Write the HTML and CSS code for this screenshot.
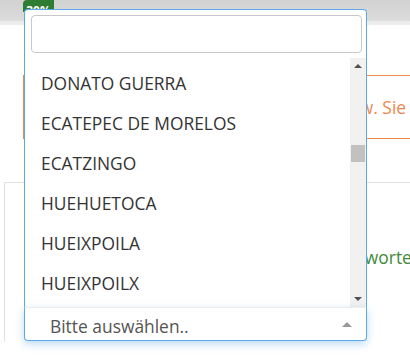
FILE: index.html
```html
<!DOCTYPE html>
<html lang="de">
<head>
  <meta charset="UTF-8" />
  <meta name="viewport" content="width=device-width, initial-scale=1.0"/>
  <title>Gemeinde auswählen</title>
  <link rel="stylesheet" href="styles.css">
</head>
<body>
  <div class="progress">
    <div class="progress-bar">30%</div>
  </div>

  <div class="alert">bzw. Sie können die Gemeinde auch eintippen.</div>

  <div class="card">
    <p class="answer">Antworten</p>
  </div>

  <div class="select-wrap">
    <div class="dropdown">
      <div class="search">
        <input type="text" class="search-field" autofocus />
      </div>
      <div class="results">
        <ul class="options">
          <li>CUAUTITLÁN IZCALLI</li>
          <li>DONATO GUERRA</li>
          <li>ECATEPEC DE MORELOS</li>
          <li>ECATZINGO</li>
          <li>HUEHUETOCA</li>
          <li>HUEIXPOILA</li>
          <li>HUEIXPOILX</li>
          <li>HUEYPOXTLA</li>
        </ul>
        <div class="scrollbar">
          <div class="scroll-btn up"></div>
          <div class="scroll-track"><div class="scroll-thumb"></div></div>
          <div class="scroll-btn down"></div>
        </div>
      </div>
    </div>
    <div class="selection">
      <span class="placeholder">Bitte auswählen..</span>
      <span class="arrow"></span>
    </div>
  </div>
</body>
</html>
```

FILE: styles.css
```css
* {
  margin: 0;
  padding: 0;
  box-sizing: border-box;
  font-family: 'Open Sans', 'Noto Sans', sans-serif;
}

html,
body {
  height: 100%;
  overflow: hidden;
}

body {
  background: #fff;
  position: relative;
}

.progress {
  height: 25px;
  background: linear-gradient(#d2d2d2, #dcdcdc);
  border-bottom: 4px solid #ececec;
}

.progress-bar {
  width: 31px;
  height: 12px;
  margin-left: 23px;
  background: #2f7d32;
  color: #fff;
  font-size: 12px;
  font-weight: bold;
  line-height: 22px;
  text-align: center;
  overflow: hidden;
  border-radius: 4px 0 0 0;
}

.alert {
  margin: 50px 0 0 23px;
  height: 64px;
  border: 1px solid #ec8a4c;
  border-left-width: 2px;
  border-right: none;
  color: #f0874f;
  font-size: 17.4px;
  line-height: 62px;
  padding-left: 316px;
  white-space: nowrap;
  overflow: hidden;
}

.card {
  margin: 43px 0 0 4px;
  height: 160px;
  border: 1px solid #e2e2e2;
  border-right: none;
  border-bottom: none;
}

.answer {
  color: #3f8a3a;
  font-size: 17.4px;
  padding: 62px 0 0 332px;
  white-space: nowrap;
  overflow: hidden;
}

.select-wrap {
  position: absolute;
  left: 24px;
  top: 9px;
  width: 343px;
  display: flex;
  flex-direction: column;
}

.dropdown {
  background: #fff;
  border: 1px solid #5aa9ec;
  border-bottom: none;
  border-radius: 4px 4px 0 0;
}

.search {
  padding: 5px 4px 5px 6px;
}

.search-field {
  display: block;
  width: 100%;
  height: 38px;
  border: 1px solid #c8c8c8;
  border-radius: 4px;
  outline: none;
  padding: 0 4px;
  font-size: 16px;
  caret-color: #333;
}

.results {
  display: flex;
  height: 249px;
  overflow: hidden;
}

.options {
  flex: 1;
  list-style: none;
  margin-top: -35px;
}

.options li {
  height: 40px;
  line-height: 40px;
  padding-left: 16px;
  font-size: 17.4px;
  color: #333;
  white-space: nowrap;
}

.scrollbar {
  width: 16px;
  background: #f1f1f1;
  display: flex;
  flex-direction: column;
}

.scroll-btn {
  height: 16px;
  display: flex;
  justify-content: center;
  align-items: center;
}

.scroll-btn::after {
  content: "";
  border-left: 4px solid transparent;
  border-right: 4px solid transparent;
}

.scroll-btn.up::after {
  border-bottom: 4px solid #505050;
}

.scroll-btn.down::after {
  border-top: 4px solid #505050;
}

.scroll-track {
  flex: 1;
}

.scroll-thumb {
  margin: 71px 1px 0 1px;
  height: 17px;
  background: #c1c1c1;
}

.selection {
  height: 34px;
  background: #fff;
  border: 1px solid #5aa9ec;
  border-top: 1px solid #ececec;
  border-radius: 0 0 4px 4px;
  box-shadow: 0 3px 8px rgba(102, 175, 233, 0.45);
  display: flex;
  align-items: center;
  justify-content: space-between;
  padding: 4px 14px 0 25px;
}

.placeholder {
  color: #555;
  font-size: 17.4px;
}

.arrow {
  border-left: 5px solid transparent;
  border-right: 5px solid transparent;
  border-bottom: 5px solid #999;
  margin-bottom: 4px;
}
```
